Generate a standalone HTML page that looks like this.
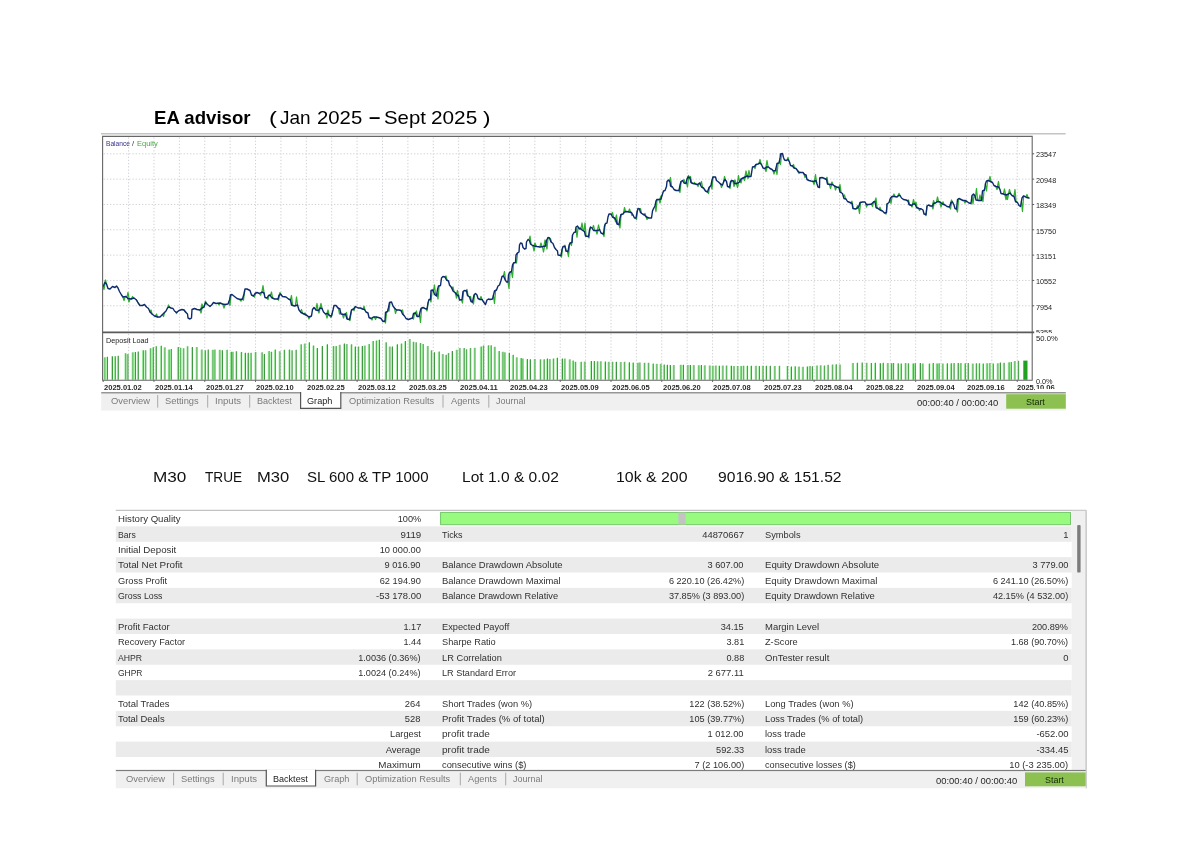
<!DOCTYPE html>
<html lang="en"><head><meta charset="utf-8"><title>EA advisor backtest</title>
<style>
html,body{margin:0;padding:0;background:#fff}
body{will-change:transform;width:1200px;height:848px;position:relative;overflow:hidden;font-family:"Liberation Sans",sans-serif}
.t{position:absolute;white-space:pre;display:block}
.r{position:absolute}
</style></head><body>
<span class="t" style="left:154.20px;transform-origin:0 50%;top:107.00px;font-size:18.4px;line-height:21px;color:#000;font-weight:bold;transform:scaleX(1.0121);">EA advisor</span>
<span class="t" style="left:269.10px;transform-origin:0 50%;top:107.00px;font-size:18.4px;line-height:21px;color:#000;transform:scaleX(1.2892);">(</span>
<span class="t" style="left:280.40px;transform-origin:0 50%;top:107.00px;font-size:18.4px;line-height:21px;color:#000;transform:scaleX(1.0314);">Jan</span>
<span class="t" style="left:317.10px;transform-origin:0 50%;top:107.00px;font-size:18.4px;line-height:21px;color:#000;transform:scaleX(1.1042);">2025</span>
<span class="t" style="left:368.70px;transform-origin:0 50%;top:106.00px;font-size:18.4px;line-height:21px;color:#000;font-weight:bold;transform:scaleX(1.1042);">–</span>
<span class="t" style="left:384.10px;transform-origin:0 50%;top:107.00px;font-size:18.4px;line-height:21px;color:#000;transform:scaleX(1.1069);">Sept</span>
<span class="t" style="left:431.10px;transform-origin:0 50%;top:107.00px;font-size:18.4px;line-height:21px;color:#000;transform:scaleX(1.1286);">2025</span>
<span class="t" style="left:482.80px;transform-origin:0 50%;top:107.00px;font-size:18.4px;line-height:21px;color:#000;transform:scaleX(1.2239);">)</span>
<svg class="r" style="left:0;top:0" width="1200" height="848" viewBox="0 0 1200 848"><line x1="101" y1="133.75" x2="1065.6" y2="133.75" stroke="#c4c4c4" stroke-width="1.4"/><path d="M128.59 137.4V331.4M128.59 333.9V379.8M153.98 137.4V331.4M153.98 333.9V379.8M179.37 137.4V331.4M179.37 333.9V379.8M204.76 137.4V331.4M204.76 333.9V379.8M230.15 137.4V331.4M230.15 333.9V379.8M255.54 137.4V331.4M255.54 333.9V379.8M280.93 137.4V331.4M280.93 333.9V379.8M306.32 137.4V331.4M306.32 333.9V379.8M331.71 137.4V331.4M331.71 333.9V379.8M357.10 137.4V331.4M357.10 333.9V379.8M382.49 137.4V331.4M382.49 333.9V379.8M407.88 137.4V331.4M407.88 333.9V379.8M433.27 137.4V331.4M433.27 333.9V379.8M458.66 137.4V331.4M458.66 333.9V379.8M484.05 137.4V331.4M484.05 333.9V379.8M509.44 137.4V331.4M509.44 333.9V379.8M534.83 137.4V331.4M534.83 333.9V379.8M560.22 137.4V331.4M560.22 333.9V379.8M585.61 137.4V331.4M585.61 333.9V379.8M611.00 137.4V331.4M611.00 333.9V379.8M636.39 137.4V331.4M636.39 333.9V379.8M661.78 137.4V331.4M661.78 333.9V379.8M687.17 137.4V331.4M687.17 333.9V379.8M712.56 137.4V331.4M712.56 333.9V379.8M737.95 137.4V331.4M737.95 333.9V379.8M763.34 137.4V331.4M763.34 333.9V379.8M788.73 137.4V331.4M788.73 333.9V379.8M814.12 137.4V331.4M814.12 333.9V379.8M839.51 137.4V331.4M839.51 333.9V379.8M864.90 137.4V331.4M864.90 333.9V379.8M890.29 137.4V331.4M890.29 333.9V379.8M915.68 137.4V331.4M915.68 333.9V379.8M941.07 137.4V331.4M941.07 333.9V379.8M966.46 137.4V331.4M966.46 333.9V379.8M991.85 137.4V331.4M991.85 333.9V379.8M1017.24 137.4V331.4M1017.24 333.9V379.8M103.6 153.80H1031.2M103.6 179.13H1031.2M103.6 204.46H1031.2M103.6 229.79H1031.2M103.6 255.12H1031.2M103.6 280.45H1031.2M103.6 305.78H1031.2" stroke="#d0d0d6" stroke-width="1" stroke-dasharray="1.3 1.9" fill="none"/><path d="M103.55 357.50h1.3V379.70h-1.3ZM106.05 357.00h1.3V379.70h-1.3ZM111.05 356.33h1.3V379.70h-1.3ZM113.88 356.33h1.3V379.70h-1.3ZM116.88 355.83h1.3V379.70h-1.3ZM124.38 353.33h1.3V379.70h-1.3ZM126.55 354.17h1.3V379.70h-1.3ZM131.55 352.50h1.3V379.70h-1.3ZM134.05 352.17h1.3V379.70h-1.3ZM136.88 351.67h1.3V379.70h-1.3ZM141.88 350.33h1.3V379.70h-1.3ZM144.38 350.33h1.3V379.70h-1.3ZM149.38 348.33h1.3V379.70h-1.3ZM151.88 347.50h1.3V379.70h-1.3ZM154.88 346.33h1.3V379.70h-1.3ZM159.88 345.83h1.3V379.70h-1.3ZM163.55 347.50h1.3V379.70h-1.3ZM167.72 349.67h1.3V379.70h-1.3ZM169.88 349.17h1.3V379.70h-1.3ZM176.88 347.17h1.3V379.70h-1.3ZM179.38 347.83h1.3V379.70h-1.3ZM182.38 348.33h1.3V379.70h-1.3ZM186.38 346.33h1.3V379.70h-1.3ZM191.05 347.17h1.3V379.70h-1.3ZM195.55 347.17h1.3V379.70h-1.3ZM200.55 349.67h1.3V379.70h-1.3ZM203.88 350.50h1.3V379.70h-1.3ZM206.88 349.67h1.3V379.70h-1.3ZM211.55 350.00h1.3V379.70h-1.3ZM213.55 349.67h1.3V379.70h-1.3ZM218.55 350.00h1.3V379.70h-1.3ZM221.05 350.33h1.3V379.70h-1.3ZM225.72 350.00h1.3V379.70h-1.3ZM229.88 352.00h1.3V379.70h-1.3ZM231.55 352.00h1.3V379.70h-1.3ZM235.22 351.33h1.3V379.70h-1.3ZM240.22 352.17h1.3V379.70h-1.3ZM244.05 353.00h1.3V379.70h-1.3ZM246.88 353.00h1.3V379.70h-1.3ZM249.72 353.00h1.3V379.70h-1.3ZM254.38 352.17h1.3V379.70h-1.3ZM260.72 352.50h1.3V379.70h-1.3ZM263.05 354.17h1.3V379.70h-1.3ZM267.72 351.17h1.3V379.70h-1.3ZM270.22 352.00h1.3V379.70h-1.3ZM273.88 349.67h1.3V379.70h-1.3ZM278.55 351.33h1.3V379.70h-1.3ZM283.22 350.00h1.3V379.70h-1.3ZM288.22 349.67h1.3V379.70h-1.3ZM290.72 350.50h1.3V379.70h-1.3ZM294.80 350.00h1.3V379.70h-1.3ZM299.80 344.50h1.3V379.70h-1.3ZM303.55 343.75h1.3V379.70h-1.3ZM308.05 342.50h1.3V379.70h-1.3ZM312.30 345.75h1.3V379.70h-1.3ZM316.05 348.25h1.3V379.70h-1.3ZM321.05 346.25h1.3V379.70h-1.3ZM326.05 344.50h1.3V379.70h-1.3ZM332.30 346.25h1.3V379.70h-1.3ZM334.80 346.25h1.3V379.70h-1.3ZM338.55 345.00h1.3V379.70h-1.3ZM343.05 343.75h1.3V379.70h-1.3ZM345.55 344.25h1.3V379.70h-1.3ZM350.30 344.50h1.3V379.70h-1.3ZM354.05 346.75h1.3V379.70h-1.3ZM357.30 346.75h1.3V379.70h-1.3ZM361.05 346.25h1.3V379.70h-1.3ZM363.55 345.75h1.3V379.70h-1.3ZM367.80 344.25h1.3V379.70h-1.3ZM371.80 341.25h1.3V379.70h-1.3ZM375.30 340.75h1.3V379.70h-1.3ZM378.05 340.00h1.3V379.70h-1.3ZM384.80 342.50h1.3V379.70h-1.3ZM388.55 346.75h1.3V379.70h-1.3ZM391.05 346.75h1.3V379.70h-1.3ZM396.05 344.50h1.3V379.70h-1.3ZM400.30 343.75h1.3V379.70h-1.3ZM404.05 341.25h1.3V379.70h-1.3ZM408.55 339.25h1.3V379.70h-1.3ZM412.30 342.00h1.3V379.70h-1.3ZM414.80 342.50h1.3V379.70h-1.3ZM419.30 343.25h1.3V379.70h-1.3ZM421.80 344.25h1.3V379.70h-1.3ZM426.55 346.25h1.3V379.70h-1.3ZM430.30 350.50h1.3V379.70h-1.3ZM433.05 352.50h1.3V379.70h-1.3ZM437.80 351.75h1.3V379.70h-1.3ZM441.55 354.25h1.3V379.70h-1.3ZM444.80 355.00h1.3V379.70h-1.3ZM447.30 353.25h1.3V379.70h-1.3ZM451.05 351.25h1.3V379.70h-1.3ZM455.55 350.00h1.3V379.70h-1.3ZM458.55 348.25h1.3V379.70h-1.3ZM462.80 348.25h1.3V379.70h-1.3ZM465.30 349.50h1.3V379.70h-1.3ZM469.30 348.25h1.3V379.70h-1.3ZM473.55 348.00h1.3V379.70h-1.3ZM479.80 346.75h1.3V379.70h-1.3ZM482.30 345.75h1.3V379.70h-1.3ZM487.30 345.50h1.3V379.70h-1.3ZM489.80 345.50h1.3V379.70h-1.3ZM493.55 347.00h1.3V379.70h-1.3ZM497.80 351.25h1.3V379.70h-1.3ZM501.55 352.00h1.3V379.70h-1.3ZM503.55 352.50h1.3V379.70h-1.3ZM508.05 353.00h1.3V379.70h-1.3ZM511.80 355.00h1.3V379.70h-1.3ZM515.55 357.50h1.3V379.70h-1.3ZM519.80 358.25h1.3V379.70h-1.3ZM521.55 358.75h1.3V379.70h-1.3ZM526.05 359.25h1.3V379.70h-1.3ZM529.05 359.50h1.3V379.70h-1.3ZM533.55 359.25h1.3V379.70h-1.3ZM539.30 359.50h1.3V379.70h-1.3ZM542.80 359.50h1.3V379.70h-1.3ZM546.05 358.75h1.3V379.70h-1.3ZM548.55 359.25h1.3V379.70h-1.3ZM552.30 358.75h1.3V379.70h-1.3ZM556.05 358.00h1.3V379.70h-1.3ZM561.05 358.75h1.3V379.70h-1.3ZM563.55 358.75h1.3V379.70h-1.3ZM568.55 359.50h1.3V379.70h-1.3ZM571.80 360.75h1.3V379.70h-1.3ZM574.30 362.00h1.3V379.70h-1.3ZM579.80 362.00h1.3V379.70h-1.3ZM583.55 361.75h1.3V379.70h-1.3ZM590.05 361.22h1.3V379.70h-1.3ZM593.15 361.32h1.3V379.70h-1.3ZM596.35 361.43h1.3V379.70h-1.3ZM599.55 361.50h1.3V379.70h-1.3ZM604.05 361.69h1.3V379.70h-1.3ZM607.55 362.01h1.3V379.70h-1.3ZM611.35 361.84h1.3V379.70h-1.3ZM615.05 361.97h1.3V379.70h-1.3ZM619.55 362.14h1.3V379.70h-1.3ZM623.35 362.01h1.3V379.70h-1.3ZM628.05 362.41h1.3V379.70h-1.3ZM631.85 362.64h1.3V379.70h-1.3ZM636.55 362.95h1.3V379.70h-1.3ZM638.55 362.62h1.3V379.70h-1.3ZM643.35 362.95h1.3V379.70h-1.3ZM647.35 363.00h1.3V379.70h-1.3ZM651.85 363.77h1.3V379.70h-1.3ZM655.55 364.01h1.3V379.70h-1.3ZM659.55 363.96h1.3V379.70h-1.3ZM662.85 364.80h1.3V379.70h-1.3ZM666.05 365.07h1.3V379.70h-1.3ZM669.05 365.10h1.3V379.70h-1.3ZM672.55 365.14h1.3V379.70h-1.3ZM679.55 364.98h1.3V379.70h-1.3ZM682.05 364.93h1.3V379.70h-1.3ZM686.55 365.32h1.3V379.70h-1.3ZM689.05 365.08h1.3V379.70h-1.3ZM692.55 365.21h1.3V379.70h-1.3ZM697.55 365.33h1.3V379.70h-1.3ZM700.05 365.24h1.3V379.70h-1.3ZM703.55 365.54h1.3V379.70h-1.3ZM708.55 365.59h1.3V379.70h-1.3ZM711.55 365.87h1.3V379.70h-1.3ZM714.55 365.71h1.3V379.70h-1.3ZM718.05 365.83h1.3V379.70h-1.3ZM721.55 365.79h1.3V379.70h-1.3ZM725.35 365.81h1.3V379.70h-1.3ZM730.05 365.84h1.3V379.70h-1.3ZM732.65 366.22h1.3V379.70h-1.3ZM736.45 366.10h1.3V379.70h-1.3ZM739.75 366.15h1.3V379.70h-1.3ZM742.35 365.87h1.3V379.70h-1.3ZM746.15 366.04h1.3V379.70h-1.3ZM749.95 365.94h1.3V379.70h-1.3ZM754.65 365.93h1.3V379.70h-1.3ZM758.15 366.21h1.3V379.70h-1.3ZM761.65 365.83h1.3V379.70h-1.3ZM765.15 365.98h1.3V379.70h-1.3ZM768.95 365.95h1.3V379.70h-1.3ZM773.55 366.08h1.3V379.70h-1.3ZM778.25 365.90h1.3V379.70h-1.3ZM786.25 366.09h1.3V379.70h-1.3ZM790.05 366.73h1.3V379.70h-1.3ZM793.85 366.55h1.3V379.70h-1.3ZM797.65 366.66h1.3V379.70h-1.3ZM801.65 366.97h1.3V379.70h-1.3ZM806.15 366.60h1.3V379.70h-1.3ZM808.65 366.30h1.3V379.70h-1.3ZM811.15 366.45h1.3V379.70h-1.3ZM815.65 365.81h1.3V379.70h-1.3ZM819.45 365.38h1.3V379.70h-1.3ZM823.25 365.65h1.3V379.70h-1.3ZM826.75 364.98h1.3V379.70h-1.3ZM831.35 364.70h1.3V379.70h-1.3ZM834.85 364.41h1.3V379.70h-1.3ZM838.65 364.62h1.3V379.70h-1.3ZM851.65 363.19h1.3V379.70h-1.3ZM856.15 362.99h1.3V379.70h-1.3ZM860.85 362.73h1.3V379.70h-1.3ZM865.45 362.98h1.3V379.70h-1.3ZM870.15 363.08h1.3V379.70h-1.3ZM873.95 362.95h1.3V379.70h-1.3ZM879.05 363.37h1.3V379.70h-1.3ZM881.88 362.90h1.3V379.70h-1.3ZM886.55 363.24h1.3V379.70h-1.3ZM890.22 363.49h1.3V379.70h-1.3ZM892.22 363.12h1.3V379.70h-1.3ZM896.88 363.55h1.3V379.70h-1.3ZM899.88 363.77h1.3V379.70h-1.3ZM904.38 363.21h1.3V379.70h-1.3ZM907.22 363.41h1.3V379.70h-1.3ZM911.88 363.60h1.3V379.70h-1.3ZM913.88 363.35h1.3V379.70h-1.3ZM919.05 363.28h1.3V379.70h-1.3ZM921.55 363.59h1.3V379.70h-1.3ZM928.22 363.68h1.3V379.70h-1.3ZM931.88 363.23h1.3V379.70h-1.3ZM935.72 363.60h1.3V379.70h-1.3ZM937.72 363.54h1.3V379.70h-1.3ZM941.55 363.65h1.3V379.70h-1.3ZM946.05 363.41h1.3V379.70h-1.3ZM949.88 363.49h1.3V379.70h-1.3ZM952.72 363.16h1.3V379.70h-1.3ZM956.88 363.14h1.3V379.70h-1.3ZM959.55 363.19h1.3V379.70h-1.3ZM963.88 363.51h1.3V379.70h-1.3ZM966.88 363.30h1.3V379.70h-1.3ZM971.55 363.69h1.3V379.70h-1.3ZM975.22 363.41h1.3V379.70h-1.3ZM978.22 363.44h1.3V379.70h-1.3ZM981.88 363.76h1.3V379.70h-1.3ZM985.72 363.35h1.3V379.70h-1.3ZM988.55 363.32h1.3V379.70h-1.3ZM991.88 363.58h1.3V379.70h-1.3ZM996.55 363.52h1.3V379.70h-1.3ZM999.05 362.79h1.3V379.70h-1.3ZM1002.72 363.00h1.3V379.70h-1.3ZM1007.72 362.50h1.3V379.70h-1.3ZM1009.88 362.14h1.3V379.70h-1.3ZM1013.55 361.16h1.3V379.70h-1.3ZM1017.22 360.99h1.3V379.70h-1.3Z" fill="#a6f3a6"/><path d="M104.55 357.30h0.9V379.70h-0.9ZM107.05 356.80h0.9V379.70h-0.9ZM112.05 356.13h0.9V379.70h-0.9ZM114.88 356.13h0.9V379.70h-0.9ZM117.88 355.63h0.9V379.70h-0.9ZM125.38 353.13h0.9V379.70h-0.9ZM127.55 353.97h0.9V379.70h-0.9ZM132.55 352.30h0.9V379.70h-0.9ZM135.05 351.97h0.9V379.70h-0.9ZM137.88 351.47h0.9V379.70h-0.9ZM142.88 350.13h0.9V379.70h-0.9ZM145.38 350.13h0.9V379.70h-0.9ZM150.38 348.13h0.9V379.70h-0.9ZM152.88 347.30h0.9V379.70h-0.9ZM155.88 346.13h0.9V379.70h-0.9ZM160.88 345.63h0.9V379.70h-0.9ZM164.55 347.30h0.9V379.70h-0.9ZM168.72 349.47h0.9V379.70h-0.9ZM170.88 348.97h0.9V379.70h-0.9ZM177.88 346.97h0.9V379.70h-0.9ZM180.38 347.63h0.9V379.70h-0.9ZM183.38 348.13h0.9V379.70h-0.9ZM187.38 346.13h0.9V379.70h-0.9ZM192.05 346.97h0.9V379.70h-0.9ZM196.55 346.97h0.9V379.70h-0.9ZM201.55 349.47h0.9V379.70h-0.9ZM204.88 350.30h0.9V379.70h-0.9ZM207.88 349.47h0.9V379.70h-0.9ZM212.55 349.80h0.9V379.70h-0.9ZM214.55 349.47h0.9V379.70h-0.9ZM219.55 349.80h0.9V379.70h-0.9ZM222.05 350.13h0.9V379.70h-0.9ZM226.72 349.80h0.9V379.70h-0.9ZM230.88 351.80h0.9V379.70h-0.9ZM232.55 351.80h0.9V379.70h-0.9ZM236.22 351.13h0.9V379.70h-0.9ZM241.22 351.97h0.9V379.70h-0.9ZM245.05 352.80h0.9V379.70h-0.9ZM247.88 352.80h0.9V379.70h-0.9ZM250.72 352.80h0.9V379.70h-0.9ZM255.38 351.97h0.9V379.70h-0.9ZM261.72 352.30h0.9V379.70h-0.9ZM264.05 353.97h0.9V379.70h-0.9ZM268.72 350.97h0.9V379.70h-0.9ZM271.22 351.80h0.9V379.70h-0.9ZM274.88 349.47h0.9V379.70h-0.9ZM279.55 351.13h0.9V379.70h-0.9ZM284.22 349.80h0.9V379.70h-0.9ZM289.22 349.47h0.9V379.70h-0.9ZM291.72 350.30h0.9V379.70h-0.9ZM295.80 349.80h0.9V379.70h-0.9ZM300.80 344.30h0.9V379.70h-0.9ZM304.55 343.55h0.9V379.70h-0.9ZM309.05 342.30h0.9V379.70h-0.9ZM313.30 345.55h0.9V379.70h-0.9ZM317.05 348.05h0.9V379.70h-0.9ZM322.05 346.05h0.9V379.70h-0.9ZM327.05 344.30h0.9V379.70h-0.9ZM333.30 346.05h0.9V379.70h-0.9ZM335.80 346.05h0.9V379.70h-0.9ZM339.55 344.80h0.9V379.70h-0.9ZM344.05 343.55h0.9V379.70h-0.9ZM346.55 344.05h0.9V379.70h-0.9ZM351.30 344.30h0.9V379.70h-0.9ZM355.05 346.55h0.9V379.70h-0.9ZM358.30 346.55h0.9V379.70h-0.9ZM362.05 346.05h0.9V379.70h-0.9ZM364.55 345.55h0.9V379.70h-0.9ZM368.80 344.05h0.9V379.70h-0.9ZM372.80 341.05h0.9V379.70h-0.9ZM376.30 340.55h0.9V379.70h-0.9ZM379.05 339.80h0.9V379.70h-0.9ZM385.80 342.30h0.9V379.70h-0.9ZM389.55 346.55h0.9V379.70h-0.9ZM392.05 346.55h0.9V379.70h-0.9ZM397.05 344.30h0.9V379.70h-0.9ZM401.30 343.55h0.9V379.70h-0.9ZM405.05 341.05h0.9V379.70h-0.9ZM409.55 339.05h0.9V379.70h-0.9ZM413.30 341.80h0.9V379.70h-0.9ZM415.80 342.30h0.9V379.70h-0.9ZM420.30 343.05h0.9V379.70h-0.9ZM422.80 344.05h0.9V379.70h-0.9ZM427.55 346.05h0.9V379.70h-0.9ZM431.30 350.30h0.9V379.70h-0.9ZM434.05 352.30h0.9V379.70h-0.9ZM438.80 351.55h0.9V379.70h-0.9ZM442.55 354.05h0.9V379.70h-0.9ZM445.80 354.80h0.9V379.70h-0.9ZM448.30 353.05h0.9V379.70h-0.9ZM452.05 351.05h0.9V379.70h-0.9ZM456.55 349.80h0.9V379.70h-0.9ZM459.55 348.05h0.9V379.70h-0.9ZM463.80 348.05h0.9V379.70h-0.9ZM466.30 349.30h0.9V379.70h-0.9ZM470.30 348.05h0.9V379.70h-0.9ZM474.55 347.80h0.9V379.70h-0.9ZM480.80 346.55h0.9V379.70h-0.9ZM483.30 345.55h0.9V379.70h-0.9ZM488.30 345.30h0.9V379.70h-0.9ZM490.80 345.30h0.9V379.70h-0.9ZM494.55 346.80h0.9V379.70h-0.9ZM498.80 351.05h0.9V379.70h-0.9ZM502.55 351.80h0.9V379.70h-0.9ZM504.55 352.30h0.9V379.70h-0.9ZM509.05 352.80h0.9V379.70h-0.9ZM512.80 354.80h0.9V379.70h-0.9ZM516.55 357.30h0.9V379.70h-0.9ZM520.80 358.05h0.9V379.70h-0.9ZM522.55 358.55h0.9V379.70h-0.9ZM527.05 359.05h0.9V379.70h-0.9ZM530.05 359.30h0.9V379.70h-0.9ZM534.55 359.05h0.9V379.70h-0.9ZM540.30 359.30h0.9V379.70h-0.9ZM543.80 359.30h0.9V379.70h-0.9ZM547.05 358.55h0.9V379.70h-0.9ZM549.55 359.05h0.9V379.70h-0.9ZM553.30 358.55h0.9V379.70h-0.9ZM557.05 357.80h0.9V379.70h-0.9ZM562.05 358.55h0.9V379.70h-0.9ZM564.55 358.55h0.9V379.70h-0.9ZM569.55 359.30h0.9V379.70h-0.9ZM572.80 360.55h0.9V379.70h-0.9ZM575.30 361.80h0.9V379.70h-0.9ZM580.80 361.80h0.9V379.70h-0.9ZM584.55 361.55h0.9V379.70h-0.9ZM591.05 361.02h0.9V379.70h-0.9ZM594.15 361.12h0.9V379.70h-0.9ZM597.35 361.23h0.9V379.70h-0.9ZM600.55 361.30h0.9V379.70h-0.9ZM605.05 361.49h0.9V379.70h-0.9ZM608.55 361.81h0.9V379.70h-0.9ZM612.35 361.64h0.9V379.70h-0.9ZM616.05 361.77h0.9V379.70h-0.9ZM620.55 361.94h0.9V379.70h-0.9ZM624.35 361.81h0.9V379.70h-0.9ZM629.05 362.21h0.9V379.70h-0.9ZM632.85 362.44h0.9V379.70h-0.9ZM637.55 362.75h0.9V379.70h-0.9ZM639.55 362.42h0.9V379.70h-0.9ZM644.35 362.75h0.9V379.70h-0.9ZM648.35 362.80h0.9V379.70h-0.9ZM652.85 363.57h0.9V379.70h-0.9ZM656.55 363.81h0.9V379.70h-0.9ZM660.55 363.76h0.9V379.70h-0.9ZM663.85 364.60h0.9V379.70h-0.9ZM667.05 364.87h0.9V379.70h-0.9ZM670.05 364.90h0.9V379.70h-0.9ZM673.55 364.94h0.9V379.70h-0.9ZM680.55 364.78h0.9V379.70h-0.9ZM683.05 364.73h0.9V379.70h-0.9ZM687.55 365.12h0.9V379.70h-0.9ZM690.05 364.88h0.9V379.70h-0.9ZM693.55 365.01h0.9V379.70h-0.9ZM698.55 365.13h0.9V379.70h-0.9ZM701.05 365.04h0.9V379.70h-0.9ZM704.55 365.34h0.9V379.70h-0.9ZM709.55 365.39h0.9V379.70h-0.9ZM712.55 365.67h0.9V379.70h-0.9ZM715.55 365.51h0.9V379.70h-0.9ZM719.05 365.63h0.9V379.70h-0.9ZM722.55 365.59h0.9V379.70h-0.9ZM726.35 365.61h0.9V379.70h-0.9ZM731.05 365.64h0.9V379.70h-0.9ZM733.65 366.02h0.9V379.70h-0.9ZM737.45 365.90h0.9V379.70h-0.9ZM740.75 365.95h0.9V379.70h-0.9ZM743.35 365.67h0.9V379.70h-0.9ZM747.15 365.84h0.9V379.70h-0.9ZM750.95 365.74h0.9V379.70h-0.9ZM755.65 365.73h0.9V379.70h-0.9ZM759.15 366.01h0.9V379.70h-0.9ZM762.65 365.63h0.9V379.70h-0.9ZM766.15 365.78h0.9V379.70h-0.9ZM769.95 365.75h0.9V379.70h-0.9ZM774.55 365.88h0.9V379.70h-0.9ZM779.25 365.70h0.9V379.70h-0.9ZM787.25 365.89h0.9V379.70h-0.9ZM791.05 366.53h0.9V379.70h-0.9ZM794.85 366.35h0.9V379.70h-0.9ZM798.65 366.46h0.9V379.70h-0.9ZM802.65 366.77h0.9V379.70h-0.9ZM807.15 366.40h0.9V379.70h-0.9ZM809.65 366.10h0.9V379.70h-0.9ZM812.15 366.25h0.9V379.70h-0.9ZM816.65 365.61h0.9V379.70h-0.9ZM820.45 365.18h0.9V379.70h-0.9ZM824.25 365.45h0.9V379.70h-0.9ZM827.75 364.78h0.9V379.70h-0.9ZM832.35 364.50h0.9V379.70h-0.9ZM835.85 364.21h0.9V379.70h-0.9ZM839.65 364.42h0.9V379.70h-0.9ZM852.65 362.99h0.9V379.70h-0.9ZM857.15 362.79h0.9V379.70h-0.9ZM861.85 362.53h0.9V379.70h-0.9ZM866.45 362.78h0.9V379.70h-0.9ZM871.15 362.88h0.9V379.70h-0.9ZM874.95 362.75h0.9V379.70h-0.9ZM880.05 363.17h0.9V379.70h-0.9ZM882.88 362.70h0.9V379.70h-0.9ZM887.55 363.04h0.9V379.70h-0.9ZM891.22 363.29h0.9V379.70h-0.9ZM893.22 362.92h0.9V379.70h-0.9ZM897.88 363.35h0.9V379.70h-0.9ZM900.88 363.57h0.9V379.70h-0.9ZM905.38 363.01h0.9V379.70h-0.9ZM908.22 363.21h0.9V379.70h-0.9ZM912.88 363.40h0.9V379.70h-0.9ZM914.88 363.15h0.9V379.70h-0.9ZM920.05 363.08h0.9V379.70h-0.9ZM922.55 363.39h0.9V379.70h-0.9ZM929.22 363.48h0.9V379.70h-0.9ZM932.88 363.03h0.9V379.70h-0.9ZM936.72 363.40h0.9V379.70h-0.9ZM938.72 363.34h0.9V379.70h-0.9ZM942.55 363.45h0.9V379.70h-0.9ZM947.05 363.21h0.9V379.70h-0.9ZM950.88 363.29h0.9V379.70h-0.9ZM953.72 362.96h0.9V379.70h-0.9ZM957.88 362.94h0.9V379.70h-0.9ZM960.55 362.99h0.9V379.70h-0.9ZM964.88 363.31h0.9V379.70h-0.9ZM967.88 363.10h0.9V379.70h-0.9ZM972.55 363.49h0.9V379.70h-0.9ZM976.22 363.21h0.9V379.70h-0.9ZM979.22 363.24h0.9V379.70h-0.9ZM982.88 363.56h0.9V379.70h-0.9ZM986.72 363.15h0.9V379.70h-0.9ZM989.55 363.12h0.9V379.70h-0.9ZM992.88 363.38h0.9V379.70h-0.9ZM997.55 363.32h0.9V379.70h-0.9ZM1000.05 362.59h0.9V379.70h-0.9ZM1003.72 362.80h0.9V379.70h-0.9ZM1008.72 362.30h0.9V379.70h-0.9ZM1010.88 361.94h0.9V379.70h-0.9ZM1014.55 360.96h0.9V379.70h-0.9ZM1018.22 360.79h0.9V379.70h-0.9Z" fill="#2d8f2d"/><rect x="1023.3" y="360.6" width="4.2" height="19.2" fill="#22a022"/><path d="M102.90 286.50L104.00 289.50L105.10 282.60M104.40 283.70L105.50 280.00L106.60 284.30M122.90 296.87L124.00 300.50L125.10 296.65M126.90 297.40L128.00 292.50L129.10 298.68M127.90 298.40L129.00 302.00L130.10 298.85M131.40 298.87L132.50 296.50L133.60 298.13M136.40 299.92L137.50 302.00L138.60 303.63M149.90 311.77L151.00 310.00L152.10 314.08M155.40 316.30L156.50 314.00L157.60 317.00M162.40 314.60L163.50 316.50L164.60 312.40M167.40 308.20L168.50 305.00L169.60 307.30M175.40 311.68L176.50 313.50L177.60 311.62M183.90 309.98L185.00 311.50L186.10 312.60M199.90 309.98L201.00 313.00L202.10 307.95M200.90 309.10L202.00 304.00L203.10 307.45M204.40 305.80L205.50 301.20L206.60 303.60M217.90 303.26L219.00 305.00L220.10 303.04M222.90 304.08L224.00 308.00L225.10 304.48M228.90 301.60L230.00 305.50L231.10 294.80M239.90 299.47L241.00 301.20L242.10 299.08M242.40 299.02L243.50 300.20L244.60 291.00M253.40 295.95L254.50 297.20L255.60 293.20M259.40 293.46L260.50 295.20L261.60 292.24M261.90 292.06L263.00 285.70L264.10 293.45M266.90 297.98L268.00 299.70L269.10 295.30M270.40 295.67L271.50 292.00L272.60 298.05M277.40 299.00L278.50 300.20L279.60 294.90M278.90 295.85L280.00 292.50L281.10 294.75M290.40 299.95L291.50 295.50L292.60 305.37M295.40 305.70L296.50 297.00L297.60 305.33M300.40 311.75L301.50 309.50L302.60 313.30M303.90 313.95L305.00 313.00L306.10 315.05M307.90 316.17L309.00 319.00L310.10 316.56M315.90 309.88L317.00 303.50L318.10 310.42M317.90 310.38L319.00 313.00L320.10 308.02M319.90 308.17L321.00 303.50L322.10 308.73M325.90 313.90L327.00 318.00L328.10 314.10M326.90 313.65L328.00 310.00L329.10 315.10M329.90 315.60L331.00 317.70L332.10 313.60M338.40 308.20L339.50 314.00L340.60 312.40M342.40 314.23L343.50 318.00L344.60 314.30M345.40 314.03L346.50 312.50L347.60 319.12M348.90 319.38L350.00 320.50L351.10 312.00M352.90 309.30L354.00 310.70L355.10 307.00M362.90 309.10L364.00 306.20L365.10 310.50M370.90 318.45L372.00 320.00L373.10 317.24M374.40 317.00L375.50 319.50L376.60 317.12M384.40 321.15L385.50 323.00L386.60 311.95M387.90 309.90L389.00 311.00L390.10 302.35M394.40 307.87L395.50 313.50L396.60 310.00M401.40 311.43L402.50 310.00L403.60 315.10M412.40 318.03L413.50 319.00L414.60 313.23M415.40 313.02L416.50 311.00L417.60 316.50M419.40 314.70L420.50 322.50L421.60 308.20M425.90 308.73L427.00 311.00L428.10 302.65M429.90 299.50L431.00 302.00L432.10 290.23M433.40 291.20L434.50 285.00L435.60 295.33M436.90 293.40L438.00 299.00L439.10 285.85M444.90 276.98L446.00 276.00L447.10 280.30M451.90 288.43L453.00 287.00L454.10 291.83M455.40 293.00L456.50 298.00L457.60 295.20M456.40 294.25L457.50 290.50L458.60 295.95M461.40 299.65L462.50 303.00L463.60 291.10M465.90 290.85L467.00 289.50L468.10 295.95M469.40 296.92L470.50 296.50L471.60 301.70M472.40 301.97L473.50 304.00L474.60 294.40M479.90 299.45L481.00 296.50L482.10 299.65M493.40 295.40L494.50 303.50L495.60 290.45M503.40 276.03L504.50 271.50L505.60 280.50M507.90 282.00L509.00 288.50L510.10 272.20M511.40 271.55L512.50 277.50L513.60 262.98M515.40 262.52L516.50 263.00L517.60 252.93M528.90 240.10L530.00 236.20L531.10 244.45M532.90 245.60L534.00 251.00L535.10 246.12M533.90 245.85L535.00 243.00L536.10 246.32M539.90 246.98L541.00 243.00L542.10 246.65M542.40 246.60L543.50 252.00L544.60 246.18M543.90 246.32L545.00 240.00L546.10 242.70M545.90 243.80L547.00 249.00L548.10 237.53M549.40 237.97L550.50 238.70L551.60 242.45M560.40 255.40L561.50 257.20L562.60 247.70M563.90 246.50L565.00 245.20L566.10 251.03M567.40 251.35L568.50 256.50L569.60 244.00M570.40 242.90L571.50 245.50L572.60 234.83M575.90 228.00L577.00 237.20L578.10 227.00M580.90 228.90L582.00 223.00L583.10 230.66M583.90 231.14L585.00 223.00L586.10 236.10M587.90 236.40L589.00 238.00L590.10 228.20M592.40 228.67L593.50 225.50L594.60 230.50M595.90 230.50L597.00 234.00L598.10 230.43M597.40 230.50L598.50 225.00L599.60 229.73M602.90 233.76L604.00 236.50L605.10 224.50M611.40 214.80L612.50 212.50L613.60 217.55M614.40 217.95L615.50 221.50L616.60 222.40M615.40 219.20L616.50 215.00L617.60 224.15M618.90 224.47L620.00 228.00L621.10 214.47M623.40 213.47L624.50 207.50L625.60 211.72M628.40 211.88L629.50 209.00L630.60 212.32M630.90 212.38L632.00 215.50L633.10 215.20M635.40 218.00L636.50 219.50L637.60 209.90M639.40 208.97L640.50 208.70L641.60 213.33M643.90 214.70L645.00 213.50L646.10 216.60M645.90 216.40L647.00 219.50L648.10 217.64M654.90 206.17L656.00 211.50L657.10 199.50M658.90 199.50L660.00 203.00L661.10 198.67M659.90 199.28L661.00 196.00L662.10 195.33M669.40 181.20L670.50 177.50L671.60 186.55M678.90 190.50L680.00 192.50L681.10 181.43M682.90 181.17L684.00 179.50L685.10 183.28M686.40 181.70L687.50 187.00L688.60 177.30M687.40 178.20L688.50 175.50L689.60 177.80M689.40 177.70L690.50 176.50L691.60 182.80M693.40 183.58L694.50 182.50L695.60 184.03M696.90 184.35L698.00 186.50L699.10 183.45M700.40 184.80L701.50 181.50L702.60 187.55M707.40 191.95L708.50 193.50L709.60 186.90M710.90 185.60L712.00 189.00L713.10 177.00M720.40 183.90L721.50 187.50L722.60 184.73M723.40 182.60L724.50 176.50L725.60 180.30M728.90 186.85L730.00 188.50L731.10 181.10M732.90 180.85L734.00 186.50L735.10 183.50M733.90 182.00L735.00 180.00L736.10 183.50M736.40 183.50L737.50 187.50L738.60 182.54M737.40 183.26L738.50 175.50L739.60 181.80M739.90 181.20L741.00 183.00L742.10 178.45M743.40 177.80L744.50 180.50L745.60 176.70M744.90 177.05L746.00 171.00L747.10 176.03M746.90 176.05L748.00 178.50L749.10 176.50M747.90 176.22L749.00 170.50L750.10 176.50M753.90 166.65L755.00 168.50L756.10 164.47M758.90 163.55L760.00 159.50L761.10 164.10M764.90 168.47L766.00 171.50L767.10 167.00M765.90 167.60L767.00 160.50L768.10 167.00M772.90 170.40L774.00 174.00L775.10 170.60M775.90 168.70L777.00 174.50L778.10 163.22M779.40 161.20L780.50 164.50L781.60 153.72M786.90 160.23L788.00 157.50L789.10 161.33M792.40 165.97L793.50 164.50L794.60 168.15M797.90 171.10L799.00 173.50L800.10 172.40M803.90 173.70L805.00 177.50L806.10 175.45M812.90 181.38L814.00 184.50L815.10 180.86M814.40 181.14L815.50 174.50L816.60 182.60M825.90 179.20L827.00 177.20L828.10 184.12M829.40 184.38L830.50 188.50L831.60 184.50M830.90 184.50L832.00 182.00L833.10 184.95M834.40 185.92L835.50 190.00L836.60 187.02M838.90 187.48L840.00 184.50L841.10 192.66M843.40 196.50L844.50 195.00L845.60 198.90M850.90 202.95L852.00 201.20L853.10 208.52M856.40 208.55L857.50 205.70L858.60 206.53M858.40 206.80L859.50 213.50L860.60 202.38M865.40 202.67L866.50 207.00L867.60 204.50M871.40 204.02L872.50 206.50L873.60 201.97M874.90 201.53L876.00 198.00L877.10 208.05M878.90 209.17L880.00 207.20L881.10 210.44M884.90 212.90L886.00 214.20L887.10 203.92M889.90 199.80L891.00 203.50L892.10 196.50M892.90 196.50L894.00 194.00L895.10 196.62M897.90 196.10L899.00 193.30L900.10 195.67M907.40 200.70L908.50 200.00L909.60 204.74M910.90 205.26L912.00 207.00L913.10 204.00M912.40 204.60L913.50 199.50L914.60 204.00M914.90 204.00L916.00 202.20L917.10 207.74M918.40 208.26L919.50 210.50L920.60 208.82M924.90 214.22L926.00 215.70L927.10 205.93M931.90 206.00L933.00 209.00L934.10 203.35M932.40 206.00L933.50 200.50L934.60 203.22M936.40 202.33L937.50 197.00L938.60 201.72M939.90 201.98L941.00 207.00L942.10 203.68M941.90 203.52L943.00 201.80L944.10 204.64M949.40 206.98L950.50 209.00L951.60 202.30M950.40 204.30L951.50 200.00L952.60 202.20M956.40 208.97L957.50 212.00L958.60 198.77M963.90 200.50L965.00 203.00L966.10 201.05M971.90 196.30L973.00 204.00L974.10 194.80M975.40 197.60L976.50 188.50L977.60 200.32M978.90 200.50L980.00 195.00L981.10 200.50M981.90 196.70L983.00 201.50L984.10 190.20M985.40 184.15L986.50 191.00L987.60 180.72M988.90 180.70L990.00 176.50L991.10 181.80M995.90 186.45L997.00 189.50L998.10 186.92M997.40 186.78L998.50 181.50L999.60 188.83M1003.40 193.98L1004.50 189.00L1005.60 194.84M1004.90 194.56L1006.00 199.50L1007.10 194.56M1006.40 194.84L1007.50 199.50L1008.60 193.93M1008.40 194.04L1009.50 189.50L1010.60 193.75M1013.90 196.45L1015.00 189.50L1016.10 201.80M1021.40 201.40L1022.50 211.50L1023.60 196.03M1025.90 197.10L1027.00 194.50L1028.10 197.82" stroke="#2fae2f" stroke-width="1.25" fill="none" stroke-linejoin="round" stroke-linecap="round"/><path d="M103.00 286.50L105.00 282.50L106.50 284.00L108.00 288.50L110.00 289.00L112.50 286.50L115.00 287.50L116.50 286.00L118.00 288.00L119.50 291.50L121.50 295.00L123.00 297.00L126.00 296.50L128.00 298.50L131.00 299.00L134.00 298.00L136.50 300.00L138.50 303.50L140.00 305.50L142.50 305.50L144.50 304.50L146.50 307.00L148.50 308.50L150.00 312.00L152.00 314.00L154.50 316.00L157.50 317.00L160.00 317.00L162.00 315.00L164.00 313.00L166.00 311.00L167.50 308.00L169.00 307.00L171.00 308.00L173.00 308.50L174.50 311.00L176.50 312.50L179.00 310.50L182.00 309.50L184.00 310.00L186.00 312.50L187.50 314.00L188.00 318.00L190.00 319.00L191.50 318.00L192.00 309.50L194.50 308.50L197.00 309.50L200.00 310.00L202.00 308.00L204.00 307.00L205.50 302.50L207.50 304.50L210.00 306.50L212.00 304.50L213.50 302.50L216.00 303.50L220.00 303.00L220.00 303.00L222.50 304.00L225.00 304.50L228.00 304.00L229.50 300.00L230.50 295.00L232.00 294.50L234.50 296.50L237.00 298.50L240.00 299.50L242.50 299.00L244.00 294.00L245.00 289.00L247.00 289.00L250.00 290.50L251.50 295.00L253.50 296.00L255.00 293.50L257.00 292.50L259.50 293.50L262.00 292.00L264.00 293.00L265.00 297.50L267.00 298.00L268.50 295.50L270.00 295.00L271.50 297.50L274.50 299.00L278.00 299.00L279.00 295.50L280.50 294.00L282.50 296.50L286.00 297.00L288.50 299.00L290.50 300.00L291.50 305.00L294.50 306.00L297.50 305.00L299.00 310.00L301.00 312.50L304.00 314.00L307.00 315.50L309.00 317.00L311.50 316.00L312.50 309.50L314.00 307.50L316.00 310.00L318.50 310.50L320.00 308.00L322.00 308.50L323.50 312.00L325.50 314.00L327.50 313.50L329.50 315.50L331.50 316.00L333.00 310.00L334.00 305.50L336.00 305.50L338.00 308.00L340.00 309.00L340.00 310.00L341.00 314.00L344.00 314.50L345.50 314.00L347.00 319.00L349.50 319.50L350.50 315.00L351.50 310.00L353.50 309.00L355.50 306.50L358.00 308.00L360.50 308.00L362.50 309.00L364.50 309.50L366.00 312.00L368.00 313.00L369.00 317.50L371.00 318.50L373.50 317.00L376.00 317.00L378.50 317.50L381.00 318.50L383.00 321.50L385.00 321.00L385.50 312.50L387.50 311.50L388.50 307.50L389.50 302.50L391.50 302.00L393.00 306.00L394.50 308.00L396.50 310.00L399.00 310.00L401.00 310.50L402.50 314.00L404.50 316.00L406.00 318.50L408.50 319.50L411.00 318.50L412.50 318.00L413.50 313.50L415.50 313.00L417.00 316.50L419.00 316.50L420.00 312.00L421.00 308.50L423.00 307.50L425.00 308.50L427.00 309.00L428.00 303.00L429.00 299.50L430.50 299.50L431.00 290.50L433.00 290.00L434.50 294.50L436.50 296.00L437.50 289.50L438.50 286.00L440.50 285.50L441.50 278.00L443.00 276.50L445.00 277.00L446.50 280.00L448.50 281.00L449.50 285.00L451.50 287.50L453.00 291.00L455.00 292.50L457.00 295.00L458.50 295.50L459.50 300.00L460.00 300.00L462.00 299.50L463.00 291.50L464.50 290.50L466.50 291.00L467.50 295.50L469.50 297.00L471.00 301.50L472.50 302.00L474.00 295.00L475.50 293.50L477.00 295.00L478.00 298.50L480.00 299.50L482.00 299.50L484.00 302.50L485.50 304.50L487.00 300.00L488.50 299.00L490.00 299.50L492.50 299.00L493.50 295.00L494.50 291.00L496.50 290.00L498.00 286.00L499.50 285.00L501.00 280.50L502.00 276.50L503.50 276.00L505.00 279.50L506.50 282.00L508.00 282.00L508.50 275.00L509.50 272.50L511.50 271.50L512.50 265.00L513.50 263.00L515.50 262.50L516.00 255.00L517.50 253.00L519.00 252.00L519.50 245.00L520.50 243.00L522.00 243.50L523.00 247.50L524.50 249.00L526.00 248.50L526.50 242.00L528.00 239.50L529.50 240.50L530.50 244.00L532.50 245.50L534.50 246.00L537.00 246.50L540.00 247.00L543.00 246.50L545.50 246.00L546.50 240.50L548.00 237.50L549.50 238.00L551.00 242.00L553.00 243.50L554.50 247.50L556.00 249.50L557.50 251.00L558.00 255.00L561.00 255.50L562.00 249.50L563.00 246.50L565.00 246.50L566.00 251.00L568.00 251.50L569.00 245.50L570.00 243.00L572.00 242.50L572.50 235.00L574.00 232.50L575.50 232.00L576.00 227.00L577.50 226.00L579.00 228.50L580.00 229.00L580.00 228.00L582.00 230.00L584.50 231.50L585.50 236.00L588.50 236.50L589.50 230.00L590.50 227.00L592.00 228.00L593.50 230.50L596.00 230.50L598.00 230.50L599.50 229.50L601.00 233.00L603.50 234.00L604.50 226.00L605.50 223.50L607.00 223.00L608.00 217.00L609.00 214.00L611.00 214.00L612.50 217.00L614.50 218.00L616.00 220.00L617.00 224.00L619.00 224.50L620.00 218.00L621.00 214.50L623.00 214.00L624.50 212.00L626.50 211.50L629.00 212.00L631.50 212.50L633.00 215.00L634.50 218.00L636.00 218.00L637.00 212.00L638.00 208.50L639.50 209.00L640.50 212.50L642.50 214.00L644.50 215.00L646.50 217.00L649.00 218.00L651.50 218.00L652.50 211.00L653.50 208.50L655.00 206.00L656.00 201.00L657.00 199.50L659.00 199.50L661.00 199.00L662.50 194.00L663.50 191.00L665.00 190.50L666.50 186.50L667.00 181.50L668.50 180.00L670.00 182.00L670.50 186.00L672.50 187.00L674.00 189.50L676.00 190.50L679.00 190.50L680.00 185.00L681.00 181.50L682.50 180.50L684.00 183.00L686.00 183.50L687.00 179.00L688.00 177.00L690.00 178.00L691.00 182.50L693.00 183.50L695.50 184.00L697.50 184.50L699.00 183.50L700.00 183.00L700.00 184.00L701.50 187.00L703.50 188.00L705.50 191.00L707.50 192.00L709.00 187.50L711.00 185.50L712.00 180.00L713.00 177.00L715.50 177.00L716.50 180.50L718.50 182.00L720.50 184.00L722.50 185.00L724.00 181.00L725.00 179.50L726.50 181.50L727.50 186.50L729.50 187.00L730.50 182.00L731.50 180.50L733.50 181.00L734.50 183.50L737.00 183.50L739.50 182.00L741.00 179.00L743.00 178.00L745.00 177.00L747.00 176.00L749.00 176.50L751.00 176.50L752.00 170.00L752.50 167.00L754.50 166.50L756.00 164.50L758.00 164.00L760.00 163.00L761.50 164.50L763.00 168.00L765.00 168.50L766.50 167.00L768.50 167.00L770.00 168.50L772.00 169.50L773.50 171.00L775.50 170.50L776.50 166.00L777.00 163.50L779.00 163.00L780.00 158.50L780.50 154.00L782.50 153.50L783.50 157.50L784.50 160.00L786.50 160.50L788.00 159.50L789.50 162.00L790.50 165.50L792.50 166.00L794.00 168.00L796.00 168.50L797.50 170.50L798.50 172.00L800.50 172.50L803.00 172.50L804.50 174.50L806.00 175.00L807.00 179.50L809.00 180.50L811.00 181.00L813.50 181.50L816.00 180.50L817.00 184.00L818.00 187.00L819.50 187.50L819.70 178.00L820.00 177.50L820.20 178.00L822.00 177.50L824.50 178.50L826.50 179.50L827.50 184.00L830.00 184.50L832.50 184.50L834.50 186.00L836.50 187.00L839.00 187.50L840.00 192.00L842.50 193.50L844.00 198.50L846.00 199.00L847.50 201.50L850.00 202.50L852.00 203.50L853.00 208.50L855.50 209.00L857.50 208.00L859.00 206.00L860.00 202.50L862.50 202.00L865.00 202.00L866.50 204.50L869.00 204.50L871.50 204.00L873.50 202.00L875.00 201.50L876.00 207.50L878.00 208.50L880.00 210.00L882.50 211.00L884.50 213.00L886.50 212.50L887.00 204.00L889.00 202.50L890.50 198.00L892.00 196.50L894.50 196.50L897.00 197.00L898.50 195.50L900.00 195.50L901.50 198.00L903.50 199.50L906.00 200.00L908.00 201.00L909.00 204.50L911.50 205.50L913.00 204.00L915.00 204.00L916.50 207.50L919.00 208.50L921.50 209.00L923.00 210.00L924.00 214.00L926.00 214.50L927.00 206.00L928.50 205.00L930.50 206.00L932.50 206.00L933.50 203.50L935.50 203.00L937.50 201.50L940.00 202.00L942.50 204.00L945.00 205.00L947.00 206.50L949.50 207.00L951.00 202.50L952.50 202.00L954.00 205.00L955.00 208.50L956.50 209.00L957.50 199.50L959.00 198.50L961.00 199.50L963.00 200.50L965.00 200.50L967.00 201.50L969.00 203.00L971.00 203.50L972.00 195.50L973.50 194.00L975.00 196.00L976.00 200.00L978.50 200.50L981.50 200.50L982.50 191.00L984.50 190.00L985.50 183.50L986.50 181.00L988.50 180.50L990.50 181.50L992.50 182.50L994.00 185.50L996.00 186.50L998.50 187.00L1000.00 189.50L1001.00 193.50L1003.50 194.00L1006.00 195.00L1008.50 194.00L1010.00 193.00L1012.00 195.50L1014.00 196.50L1015.50 201.50L1017.50 202.50L1019.00 205.50L1020.50 206.50L1022.00 198.00L1023.50 196.00L1025.00 196.50L1026.50 197.50L1029.00 198.00" stroke="#0c2a6e" stroke-width="1.4" fill="none" stroke-linejoin="round" stroke-linecap="round"/><path d="M102.60 136.40H1032.20V380.30H102.60Z" stroke="#666" stroke-width="1.1" fill="none"/><line x1="102.60" y1="332.40" x2="1034.20" y2="332.40" stroke="#5a5a5a" stroke-width="1.9"/><path d="M1032.20 153.80h2M1032.20 179.13h2M1032.20 204.46h2M1032.20 229.79h2M1032.20 255.12h2M1032.20 280.45h2M1032.20 305.78h2" stroke="#5a5a5a" stroke-width="1"/><path d="M103.20 380.30v1.6M153.98 380.30v1.6M204.76 380.30v1.6M255.54 380.30v1.6M306.32 380.30v1.6M357.10 380.30v1.6M407.88 380.30v1.6M458.66 380.30v1.6M509.44 380.30v1.6M560.22 380.30v1.6M611.00 380.30v1.6M661.78 380.30v1.6M712.56 380.30v1.6M763.34 380.30v1.6M814.12 380.30v1.6M864.90 380.30v1.6M915.68 380.30v1.6M966.46 380.30v1.6M1017.24 380.30v1.6" stroke="#5a5a5a" stroke-width="1"/></svg>
<svg class="r" style="left:0;top:0" width="1200" height="848" viewBox="0 0 1200 848"><rect x="101.20" y="393.30" width="964.60" height="17.30" fill="#f0f0f0"/><rect x="101.20" y="392.20" width="964.60" height="1.20" fill="#7d7d7d"/><path d="M300.60 392.00V408.30H340.80V392.00" fill="#fff" stroke="#555" stroke-width="1.2"/><rect x="157.20" y="395.00" width="1.00" height="12.60" fill="#a8a8a8"/><rect x="207.20" y="395.00" width="1.00" height="12.60" fill="#a8a8a8"/><rect x="249.20" y="395.00" width="1.00" height="12.60" fill="#a8a8a8"/><rect x="442.50" y="395.00" width="1.00" height="12.60" fill="#a8a8a8"/><rect x="488.30" y="395.00" width="1.00" height="12.60" fill="#a8a8a8"/><rect x="1006.20" y="394.20" width="59.60" height="14.50" fill="#8cc152"/><rect x="115.80" y="509.80" width="970.40" height="1.00" fill="#b4b4b4"/><rect x="1071.70" y="510.80" width="14.50" height="259.20" fill="#f0f0f0"/><rect x="1085.50" y="510.30" width="1.30" height="278.10" fill="#c2c2c2"/><rect x="115.80" y="526.38" width="955.90" height="15.38" fill="#ebebeb"/><rect x="115.80" y="557.12" width="955.90" height="15.38" fill="#ebebeb"/><rect x="115.80" y="587.88" width="955.90" height="15.38" fill="#ebebeb"/><rect x="115.80" y="618.62" width="955.90" height="15.38" fill="#ebebeb"/><rect x="115.80" y="649.38" width="955.90" height="15.38" fill="#ebebeb"/><rect x="115.80" y="680.12" width="955.90" height="15.38" fill="#ebebeb"/><rect x="115.80" y="710.88" width="955.90" height="15.38" fill="#ebebeb"/><rect x="115.80" y="741.62" width="955.90" height="15.38" fill="#ebebeb"/><rect x="440.6" y="512.4" width="629.9" height="12.3" fill="#98fb80" stroke="#6cc362" stroke-width="0.9"/><rect x="678.30" y="512.60" width="7.40" height="11.80" fill="#c3c3c3"/><rect x="1077.20" y="524.90" width="3.40" height="47.70" fill="#7c7c7c" rx="1.2"/><rect x="115.80" y="771.00" width="969.90" height="17.30" fill="#f0f0f0"/><rect x="115.80" y="769.90" width="969.90" height="1.20" fill="#7d7d7d"/><path d="M266.30 769.70V786.00H315.60V769.70" fill="#fff" stroke="#555" stroke-width="1.2"/><rect x="173.10" y="772.70" width="1.00" height="12.60" fill="#a8a8a8"/><rect x="222.70" y="772.70" width="1.00" height="12.60" fill="#a8a8a8"/><rect x="356.70" y="772.70" width="1.00" height="12.60" fill="#a8a8a8"/><rect x="459.80" y="772.70" width="1.00" height="12.60" fill="#a8a8a8"/><rect x="505.20" y="772.70" width="1.00" height="12.60" fill="#a8a8a8"/><rect x="1025.00" y="772.40" width="60.70" height="13.90" fill="#8cc152"/></svg>
<span class="t" style="left:105.55px;transform-origin:0 50%;top:139.00px;font-size:7.5px;line-height:9px;color:#33338f;transform:scaleX(0.8855);">Balance</span>
<span class="t" style="left:132.00px;transform-origin:0 50%;top:139.00px;font-size:7.5px;line-height:9px;color:#333;">/</span>
<span class="t" style="left:136.80px;transform-origin:0 50%;top:139.00px;font-size:7.5px;line-height:9px;color:#46a846;transform:scaleX(0.9978);">Equity</span>
<span class="t" style="left:105.60px;transform-origin:0 50%;top:336.00px;font-size:7.5px;line-height:9px;color:#222;transform:scaleX(0.9638);">Deposit Load</span>
<span class="t" style="left:1035.80px;transform-origin:0 50%;top:150.00px;font-size:7.5px;line-height:9px;color:#222;transform:scaleX(0.9685);">23547</span>
<span class="t" style="left:1035.80px;transform-origin:0 50%;top:176.00px;font-size:7.5px;line-height:9px;color:#222;transform:scaleX(0.9685);">20948</span>
<span class="t" style="left:1035.80px;transform-origin:0 50%;top:201.00px;font-size:7.5px;line-height:9px;color:#222;transform:scaleX(0.9685);">18349</span>
<span class="t" style="left:1035.80px;transform-origin:0 50%;top:227.00px;font-size:7.5px;line-height:9px;color:#222;transform:scaleX(0.9685);">15750</span>
<span class="t" style="left:1035.80px;transform-origin:0 50%;top:252.00px;font-size:7.5px;line-height:9px;color:#222;transform:scaleX(0.9685);">13151</span>
<span class="t" style="left:1035.80px;transform-origin:0 50%;top:277.00px;font-size:7.5px;line-height:9px;color:#222;transform:scaleX(0.9685);">10552</span>
<span class="t" style="left:1035.80px;transform-origin:0 50%;top:303.00px;font-size:7.5px;line-height:9px;color:#222;transform:scaleX(0.9685);">7954</span>
<div class="r" style="left:1034px;top:328.9px;width:26px;height:4.1px;overflow:hidden">
<span class="t" style="left:1.80px;transform-origin:0 50%;top:-1.00px;font-size:7.5px;line-height:9px;color:#222;transform:scaleX(0.9709);">5355</span>
</div>
<span class="t" style="left:1035.80px;transform-origin:0 50%;top:334.00px;font-size:7.5px;line-height:9px;color:#222;transform:scaleX(1.0204);">50.0%</span>
<span class="t" style="left:1035.80px;transform-origin:0 50%;top:377.00px;font-size:7.5px;line-height:9px;color:#222;transform:scaleX(0.9711);">0.0%</span>
<span class="t" style="left:104.10px;transform-origin:0 50%;top:383.00px;font-size:7.9px;line-height:9px;color:#2a2a2a;font-weight:bold;transform:scaleX(0.9560);">2025.01.02</span>
<span class="t" style="left:154.88px;transform-origin:0 50%;top:383.00px;font-size:7.9px;line-height:9px;color:#2a2a2a;font-weight:bold;transform:scaleX(0.9560);">2025.01.14</span>
<span class="t" style="left:205.66px;transform-origin:0 50%;top:383.00px;font-size:7.9px;line-height:9px;color:#2a2a2a;font-weight:bold;transform:scaleX(0.9560);">2025.01.27</span>
<span class="t" style="left:256.44px;transform-origin:0 50%;top:383.00px;font-size:7.9px;line-height:9px;color:#2a2a2a;font-weight:bold;transform:scaleX(0.9560);">2025.02.10</span>
<span class="t" style="left:307.22px;transform-origin:0 50%;top:383.00px;font-size:7.9px;line-height:9px;color:#2a2a2a;font-weight:bold;transform:scaleX(0.9560);">2025.02.25</span>
<span class="t" style="left:358.00px;transform-origin:0 50%;top:383.00px;font-size:7.9px;line-height:9px;color:#2a2a2a;font-weight:bold;transform:scaleX(0.9560);">2025.03.12</span>
<span class="t" style="left:408.78px;transform-origin:0 50%;top:383.00px;font-size:7.9px;line-height:9px;color:#2a2a2a;font-weight:bold;transform:scaleX(0.9560);">2025.03.25</span>
<span class="t" style="left:459.56px;transform-origin:0 50%;top:383.00px;font-size:7.9px;line-height:9px;color:#2a2a2a;font-weight:bold;transform:scaleX(0.9667);">2025.04.11</span>
<span class="t" style="left:510.34px;transform-origin:0 50%;top:383.00px;font-size:7.9px;line-height:9px;color:#2a2a2a;font-weight:bold;transform:scaleX(0.9560);">2025.04.23</span>
<span class="t" style="left:561.12px;transform-origin:0 50%;top:383.00px;font-size:7.9px;line-height:9px;color:#2a2a2a;font-weight:bold;transform:scaleX(0.9560);">2025.05.09</span>
<span class="t" style="left:611.90px;transform-origin:0 50%;top:383.00px;font-size:7.9px;line-height:9px;color:#2a2a2a;font-weight:bold;transform:scaleX(0.9560);">2025.06.05</span>
<span class="t" style="left:662.68px;transform-origin:0 50%;top:383.00px;font-size:7.9px;line-height:9px;color:#2a2a2a;font-weight:bold;transform:scaleX(0.9560);">2025.06.20</span>
<span class="t" style="left:713.46px;transform-origin:0 50%;top:383.00px;font-size:7.9px;line-height:9px;color:#2a2a2a;font-weight:bold;transform:scaleX(0.9560);">2025.07.08</span>
<span class="t" style="left:764.24px;transform-origin:0 50%;top:383.00px;font-size:7.9px;line-height:9px;color:#2a2a2a;font-weight:bold;transform:scaleX(0.9560);">2025.07.23</span>
<span class="t" style="left:815.02px;transform-origin:0 50%;top:383.00px;font-size:7.9px;line-height:9px;color:#2a2a2a;font-weight:bold;transform:scaleX(0.9560);">2025.08.04</span>
<span class="t" style="left:865.80px;transform-origin:0 50%;top:383.00px;font-size:7.9px;line-height:9px;color:#2a2a2a;font-weight:bold;transform:scaleX(0.9560);">2025.08.22</span>
<span class="t" style="left:916.58px;transform-origin:0 50%;top:383.00px;font-size:7.9px;line-height:9px;color:#2a2a2a;font-weight:bold;transform:scaleX(0.9560);">2025.09.04</span>
<span class="t" style="left:967.36px;transform-origin:0 50%;top:383.00px;font-size:7.9px;line-height:9px;color:#2a2a2a;font-weight:bold;transform:scaleX(0.9560);">2025.09.16</span>
<div class="r" style="left:1016px;top:381px;width:19.3px;height:12px;overflow:hidden">
<span class="t" style="left:0.90px;transform-origin:0 50%;top:2.00px;font-size:7.9px;line-height:9px;color:#2a2a2a;font-weight:bold;transform:scaleX(0.9560);">2025.10.06</span>
</div>
<div class="r" style="left:1035.3px;top:381px;width:30px;height:8.0px;overflow:hidden">
<span class="t" style="left:-18.40px;transform-origin:0 50%;top:2.00px;font-size:7.9px;line-height:9px;color:#2a2a2a;font-weight:bold;transform:scaleX(0.9560);">2025.10.06</span>
</div>
<span class="t" style="left:111.00px;transform-origin:0 50%;top:395.00px;font-size:9.9px;line-height:11px;color:#7a7a7a;transform:scaleX(0.9501);">Overview</span>
<span class="t" style="left:165.30px;transform-origin:0 50%;top:395.00px;font-size:9.9px;line-height:11px;color:#7a7a7a;transform:scaleX(0.9449);">Settings</span>
<span class="t" style="left:215.10px;transform-origin:0 50%;top:395.00px;font-size:9.9px;line-height:11px;color:#7a7a7a;transform:scaleX(0.9715);">Inputs</span>
<span class="t" style="left:257.30px;transform-origin:0 50%;top:395.00px;font-size:9.9px;line-height:11px;color:#7a7a7a;transform:scaleX(0.9166);">Backtest</span>
<span class="t" style="left:307.40px;transform-origin:0 50%;top:395.00px;font-size:9.9px;line-height:11px;color:#222;transform:scaleX(0.9267);">Graph</span>
<span class="t" style="left:349.10px;transform-origin:0 50%;top:395.00px;font-size:9.9px;line-height:11px;color:#7a7a7a;transform:scaleX(0.9407);">Optimization Results</span>
<span class="t" style="left:451.10px;transform-origin:0 50%;top:395.00px;font-size:9.9px;line-height:11px;color:#7a7a7a;transform:scaleX(0.9376);">Agents</span>
<span class="t" style="left:496.10px;transform-origin:0 50%;top:395.00px;font-size:9.9px;line-height:11px;color:#7a7a7a;transform:scaleX(0.9085);">Journal</span>
<span class="t" style="left:916.80px;transform-origin:0 50%;top:397.00px;font-size:9.5px;line-height:11px;color:#262626;transform:scaleX(0.9917);">00:00:40 / 00:00:40</span>
<span class="t" style="left:1026.40px;transform-origin:0 50%;top:396.00px;font-size:9.9px;line-height:11px;color:#122806;transform:scaleX(0.9040);">Start</span>
<span class="t" style="left:153.00px;transform-origin:0 50%;top:469.00px;font-size:14.8px;line-height:16px;color:#111;transform:scaleX(1.1601);">M30</span>
<span class="t" style="left:204.80px;transform-origin:0 50%;top:469.00px;font-size:14.8px;line-height:16px;color:#111;transform:scaleX(0.9233);">TRUE</span>
<span class="t" style="left:256.50px;transform-origin:0 50%;top:469.00px;font-size:14.8px;line-height:16px;color:#111;transform:scaleX(1.1184);">M30</span>
<span class="t" style="left:306.90px;transform-origin:0 50%;top:469.00px;font-size:14.8px;line-height:16px;color:#111;transform:scaleX(1.0144);">SL 600 &amp; TP 1000</span>
<span class="t" style="left:461.60px;transform-origin:0 50%;top:469.00px;font-size:14.8px;line-height:16px;color:#111;transform:scaleX(1.0514);">Lot 1.0 &amp; 0.02</span>
<span class="t" style="left:615.60px;transform-origin:0 50%;top:469.00px;font-size:14.8px;line-height:16px;color:#111;transform:scaleX(1.0727);">10k &amp; 200</span>
<span class="t" style="left:718.20px;transform-origin:0 50%;top:469.00px;font-size:14.8px;line-height:16px;color:#111;transform:scaleX(1.0576);">9016.90 &amp; 151.52</span>
<div class="r" style="left:115.8px;top:511.0px;width:955.8px;height:259.3px;overflow:hidden">
<span class="t" style="left:2.30px;transform-origin:0 50%;top:2.00px;font-size:9.9px;line-height:11px;color:#303030;transform:scaleX(0.9749);">History Quality</span>
<span class="t" style="right:650.80px;transform-origin:100% 50%;top:2.00px;font-size:9.9px;line-height:11px;color:#303030;transform:scaleX(0.9324);">100%</span>
<span class="t" style="left:2.30px;transform-origin:0 50%;top:18.00px;font-size:9.9px;line-height:11px;color:#303030;transform:scaleX(0.8743);">Bars</span>
<span class="t" style="right:650.80px;transform-origin:100% 50%;top:18.00px;font-size:9.9px;line-height:11px;color:#303030;transform:scaleX(0.9820);">9119</span>
<span class="t" style="left:326.25px;transform-origin:0 50%;top:18.00px;font-size:9.9px;line-height:11px;color:#303030;transform:scaleX(0.9078);">Ticks</span>
<span class="t" style="right:327.80px;transform-origin:100% 50%;top:18.00px;font-size:9.9px;line-height:11px;color:#303030;transform:scaleX(0.9493);">44870667</span>
<span class="t" style="left:649.05px;transform-origin:0 50%;top:18.00px;font-size:9.9px;line-height:11px;color:#303030;transform:scaleX(0.9392);">Symbols</span>
<span class="t" style="right:3.60px;transform-origin:100% 50%;top:18.00px;font-size:9.9px;line-height:11px;color:#303030;transform:scaleX(0.9493);">1</span>
<span class="t" style="left:2.30px;transform-origin:0 50%;top:33.00px;font-size:9.9px;line-height:11px;color:#303030;transform:scaleX(0.9827);">Initial Deposit</span>
<span class="t" style="right:650.80px;transform-origin:100% 50%;top:33.00px;font-size:9.9px;line-height:11px;color:#303030;transform:scaleX(0.9387);">10 000.00</span>
<span class="t" style="left:2.30px;transform-origin:0 50%;top:48.00px;font-size:9.9px;line-height:11px;color:#303030;transform:scaleX(0.9973);">Total Net Profit</span>
<span class="t" style="right:650.80px;transform-origin:100% 50%;top:48.00px;font-size:9.9px;line-height:11px;color:#303030;transform:scaleX(0.9372);">9 016.90</span>
<span class="t" style="left:326.25px;transform-origin:0 50%;top:48.00px;font-size:9.9px;line-height:11px;color:#303030;transform:scaleX(0.9589);">Balance Drawdown Absolute</span>
<span class="t" style="right:327.80px;transform-origin:100% 50%;top:48.00px;font-size:9.9px;line-height:11px;color:#303030;transform:scaleX(0.9372);">3 607.00</span>
<span class="t" style="left:649.05px;transform-origin:0 50%;top:48.00px;font-size:9.9px;line-height:11px;color:#303030;transform:scaleX(0.9722);">Equity Drawdown Absolute</span>
<span class="t" style="right:3.60px;transform-origin:100% 50%;top:48.00px;font-size:9.9px;line-height:11px;color:#303030;transform:scaleX(0.9372);">3 779.00</span>
<span class="t" style="left:2.30px;transform-origin:0 50%;top:64.00px;font-size:9.9px;line-height:11px;color:#303030;transform:scaleX(0.9423);">Gross Profit</span>
<span class="t" style="right:650.80px;transform-origin:100% 50%;top:64.00px;font-size:9.9px;line-height:11px;color:#303030;transform:scaleX(0.9387);">62 194.90</span>
<span class="t" style="left:326.25px;transform-origin:0 50%;top:64.00px;font-size:9.9px;line-height:11px;color:#303030;transform:scaleX(0.9527);">Balance Drawdown Maximal</span>
<span class="t" style="right:327.80px;transform-origin:100% 50%;top:64.00px;font-size:9.9px;line-height:11px;color:#303030;transform:scaleX(0.9276);">6 220.10 (26.42%)</span>
<span class="t" style="left:649.05px;transform-origin:0 50%;top:64.00px;font-size:9.9px;line-height:11px;color:#303030;transform:scaleX(0.9657);">Equity Drawdown Maximal</span>
<span class="t" style="right:3.60px;transform-origin:100% 50%;top:64.00px;font-size:9.9px;line-height:11px;color:#303030;transform:scaleX(0.9276);">6 241.10 (26.50%)</span>
<span class="t" style="left:2.30px;transform-origin:0 50%;top:79.00px;font-size:9.9px;line-height:11px;color:#303030;transform:scaleX(0.8910);">Gross Loss</span>
<span class="t" style="right:650.80px;transform-origin:100% 50%;top:79.00px;font-size:9.9px;line-height:11px;color:#303030;transform:scaleX(0.9553);">-53 178.00</span>
<span class="t" style="left:326.25px;transform-origin:0 50%;top:79.00px;font-size:9.9px;line-height:11px;color:#303030;transform:scaleX(0.9405);">Balance Drawdown Relative</span>
<span class="t" style="right:327.80px;transform-origin:100% 50%;top:79.00px;font-size:9.9px;line-height:11px;color:#303030;transform:scaleX(0.9276);">37.85% (3 893.00)</span>
<span class="t" style="left:649.05px;transform-origin:0 50%;top:79.00px;font-size:9.9px;line-height:11px;color:#303030;transform:scaleX(0.9528);">Equity Drawdown Relative</span>
<span class="t" style="right:3.60px;transform-origin:100% 50%;top:79.00px;font-size:9.9px;line-height:11px;color:#303030;transform:scaleX(0.9276);">42.15% (4 532.00)</span>
<span class="t" style="left:2.30px;transform-origin:0 50%;top:110.00px;font-size:9.9px;line-height:11px;color:#303030;transform:scaleX(0.9603);">Profit Factor</span>
<span class="t" style="right:650.80px;transform-origin:100% 50%;top:110.00px;font-size:9.9px;line-height:11px;color:#303030;transform:scaleX(0.9229);">1.17</span>
<span class="t" style="left:326.25px;transform-origin:0 50%;top:110.00px;font-size:9.9px;line-height:11px;color:#303030;transform:scaleX(0.9375);">Expected Payoff</span>
<span class="t" style="right:327.80px;transform-origin:100% 50%;top:110.00px;font-size:9.9px;line-height:11px;color:#303030;transform:scaleX(0.9287);">34.15</span>
<span class="t" style="left:649.05px;transform-origin:0 50%;top:110.00px;font-size:9.9px;line-height:11px;color:#303030;transform:scaleX(0.9589);">Margin Level</span>
<span class="t" style="right:3.60px;transform-origin:100% 50%;top:110.00px;font-size:9.9px;line-height:11px;color:#303030;transform:scaleX(0.9254);">200.89%</span>
<span class="t" style="left:2.30px;transform-origin:0 50%;top:125.00px;font-size:9.9px;line-height:11px;color:#303030;transform:scaleX(0.9260);">Recovery Factor</span>
<span class="t" style="right:650.80px;transform-origin:100% 50%;top:125.00px;font-size:9.9px;line-height:11px;color:#303030;transform:scaleX(0.9229);">1.44</span>
<span class="t" style="left:326.25px;transform-origin:0 50%;top:125.00px;font-size:9.9px;line-height:11px;color:#303030;transform:scaleX(0.9323);">Sharpe Ratio</span>
<span class="t" style="right:327.80px;transform-origin:100% 50%;top:125.00px;font-size:9.9px;line-height:11px;color:#303030;transform:scaleX(0.9229);">3.81</span>
<span class="t" style="left:649.05px;transform-origin:0 50%;top:125.00px;font-size:9.9px;line-height:11px;color:#303030;transform:scaleX(0.9324);">Z-Score</span>
<span class="t" style="right:3.60px;transform-origin:100% 50%;top:125.00px;font-size:9.9px;line-height:11px;color:#303030;transform:scaleX(0.9202);">1.68 (90.70%)</span>
<span class="t" style="left:2.30px;transform-origin:0 50%;top:141.00px;font-size:9.9px;line-height:11px;color:#303030;transform:scaleX(0.8771);">AHPR</span>
<span class="t" style="right:650.80px;transform-origin:100% 50%;top:141.00px;font-size:9.9px;line-height:11px;color:#303030;transform:scaleX(0.9226);">1.0036 (0.36%)</span>
<span class="t" style="left:326.25px;transform-origin:0 50%;top:141.00px;font-size:9.9px;line-height:11px;color:#303030;transform:scaleX(0.9399);">LR Correlation</span>
<span class="t" style="right:327.80px;transform-origin:100% 50%;top:141.00px;font-size:9.9px;line-height:11px;color:#303030;transform:scaleX(0.9229);">0.88</span>
<span class="t" style="left:649.05px;transform-origin:0 50%;top:141.00px;font-size:9.9px;line-height:11px;color:#303030;transform:scaleX(0.9605);">OnTester result</span>
<span class="t" style="right:3.60px;transform-origin:100% 50%;top:141.00px;font-size:9.9px;line-height:11px;color:#303030;transform:scaleX(0.9493);">0</span>
<span class="t" style="left:2.30px;transform-origin:0 50%;top:156.00px;font-size:9.9px;line-height:11px;color:#303030;transform:scaleX(0.8573);">GHPR</span>
<span class="t" style="right:650.80px;transform-origin:100% 50%;top:156.00px;font-size:9.9px;line-height:11px;color:#303030;transform:scaleX(0.9226);">1.0024 (0.24%)</span>
<span class="t" style="left:326.25px;transform-origin:0 50%;top:156.00px;font-size:9.9px;line-height:11px;color:#303030;transform:scaleX(0.9234);">LR Standard Error</span>
<span class="t" style="right:327.80px;transform-origin:100% 50%;top:156.00px;font-size:9.9px;line-height:11px;color:#303030;transform:scaleX(0.9555);">2 677.11</span>
<span class="t" style="left:2.30px;transform-origin:0 50%;top:187.00px;font-size:9.9px;line-height:11px;color:#303030;transform:scaleX(0.9593);">Total Trades</span>
<span class="t" style="right:650.80px;transform-origin:100% 50%;top:187.00px;font-size:9.9px;line-height:11px;color:#303030;transform:scaleX(0.9493);">264</span>
<span class="t" style="left:326.25px;transform-origin:0 50%;top:187.00px;font-size:9.9px;line-height:11px;color:#303030;transform:scaleX(0.9428);">Short Trades (won %)</span>
<span class="t" style="right:327.80px;transform-origin:100% 50%;top:187.00px;font-size:9.9px;line-height:11px;color:#303030;transform:scaleX(0.9274);">122 (38.52%)</span>
<span class="t" style="left:649.05px;transform-origin:0 50%;top:187.00px;font-size:9.9px;line-height:11px;color:#303030;transform:scaleX(0.9430);">Long Trades (won %)</span>
<span class="t" style="right:3.60px;transform-origin:100% 50%;top:187.00px;font-size:9.9px;line-height:11px;color:#303030;transform:scaleX(0.9274);">142 (40.85%)</span>
<span class="t" style="left:2.30px;transform-origin:0 50%;top:202.00px;font-size:9.9px;line-height:11px;color:#303030;transform:scaleX(0.9552);">Total Deals</span>
<span class="t" style="right:650.80px;transform-origin:100% 50%;top:202.00px;font-size:9.9px;line-height:11px;color:#303030;transform:scaleX(0.9493);">528</span>
<span class="t" style="left:326.25px;transform-origin:0 50%;top:202.00px;font-size:9.9px;line-height:11px;color:#303030;transform:scaleX(0.9654);">Profit Trades (% of total)</span>
<span class="t" style="right:327.80px;transform-origin:100% 50%;top:202.00px;font-size:9.9px;line-height:11px;color:#303030;transform:scaleX(0.9274);">105 (39.77%)</span>
<span class="t" style="left:649.05px;transform-origin:0 50%;top:202.00px;font-size:9.9px;line-height:11px;color:#303030;transform:scaleX(0.9413);">Loss Trades (% of total)</span>
<span class="t" style="right:3.60px;transform-origin:100% 50%;top:202.00px;font-size:9.9px;line-height:11px;color:#303030;transform:scaleX(0.9274);">159 (60.23%)</span>
<span class="t" style="right:650.80px;transform-origin:100% 50%;top:217.00px;font-size:9.9px;line-height:11px;color:#303030;transform:scaleX(0.9398);">Largest</span>
<span class="t" style="left:326.25px;transform-origin:0 50%;top:217.00px;font-size:9.9px;line-height:11px;color:#303030;transform:scaleX(1.0134);">profit trade</span>
<span class="t" style="right:327.80px;transform-origin:100% 50%;top:217.00px;font-size:9.9px;line-height:11px;color:#303030;transform:scaleX(0.9372);">1 012.00</span>
<span class="t" style="left:649.05px;transform-origin:0 50%;top:217.00px;font-size:9.9px;line-height:11px;color:#303030;transform:scaleX(0.9521);">loss trade</span>
<span class="t" style="right:3.60px;transform-origin:100% 50%;top:217.00px;font-size:9.9px;line-height:11px;color:#303030;transform:scaleX(0.9564);">-652.00</span>
<span class="t" style="right:650.80px;transform-origin:100% 50%;top:233.00px;font-size:9.9px;line-height:11px;color:#303030;transform:scaleX(0.9550);">Average</span>
<span class="t" style="left:326.25px;transform-origin:0 50%;top:233.00px;font-size:9.9px;line-height:11px;color:#303030;transform:scaleX(1.0134);">profit trade</span>
<span class="t" style="right:327.80px;transform-origin:100% 50%;top:233.00px;font-size:9.9px;line-height:11px;color:#303030;transform:scaleX(0.9325);">592.33</span>
<span class="t" style="left:649.05px;transform-origin:0 50%;top:233.00px;font-size:9.9px;line-height:11px;color:#303030;transform:scaleX(0.9521);">loss trade</span>
<span class="t" style="right:3.60px;transform-origin:100% 50%;top:233.00px;font-size:9.9px;line-height:11px;color:#303030;transform:scaleX(0.9564);">-334.45</span>
<span class="t" style="right:650.80px;transform-origin:100% 50%;top:248.00px;font-size:9.9px;line-height:11px;color:#303030;transform:scaleX(0.9938);">Maximum</span>
<span class="t" style="left:326.25px;transform-origin:0 50%;top:248.00px;font-size:9.9px;line-height:11px;color:#303030;transform:scaleX(0.9439);">consecutive wins ($)</span>
<span class="t" style="right:327.80px;transform-origin:100% 50%;top:248.00px;font-size:9.9px;line-height:11px;color:#303030;transform:scaleX(0.9338);">7 (2 106.00)</span>
<span class="t" style="left:649.05px;transform-origin:0 50%;top:248.00px;font-size:9.9px;line-height:11px;color:#303030;transform:scaleX(0.9298);">consecutive losses ($)</span>
<span class="t" style="right:3.60px;transform-origin:100% 50%;top:248.00px;font-size:9.9px;line-height:11px;color:#303030;transform:scaleX(0.9480);">10 (-3 235.00)</span>
</div>
<span class="t" style="left:126.10px;transform-origin:0 50%;top:773.00px;font-size:9.9px;line-height:11px;color:#7a7a7a;transform:scaleX(0.9501);">Overview</span>
<span class="t" style="left:181.30px;transform-origin:0 50%;top:773.00px;font-size:9.9px;line-height:11px;color:#7a7a7a;transform:scaleX(0.9449);">Settings</span>
<span class="t" style="left:230.90px;transform-origin:0 50%;top:773.00px;font-size:9.9px;line-height:11px;color:#7a7a7a;transform:scaleX(0.9715);">Inputs</span>
<span class="t" style="left:273.40px;transform-origin:0 50%;top:773.00px;font-size:9.9px;line-height:11px;color:#222;transform:scaleX(0.9166);">Backtest</span>
<span class="t" style="left:323.80px;transform-origin:0 50%;top:773.00px;font-size:9.9px;line-height:11px;color:#7a7a7a;transform:scaleX(0.9267);">Graph</span>
<span class="t" style="left:364.90px;transform-origin:0 50%;top:773.00px;font-size:9.9px;line-height:11px;color:#7a7a7a;transform:scaleX(0.9407);">Optimization Results</span>
<span class="t" style="left:468.10px;transform-origin:0 50%;top:773.00px;font-size:9.9px;line-height:11px;color:#7a7a7a;transform:scaleX(0.9376);">Agents</span>
<span class="t" style="left:512.80px;transform-origin:0 50%;top:773.00px;font-size:9.9px;line-height:11px;color:#7a7a7a;transform:scaleX(0.9085);">Journal</span>
<span class="t" style="left:935.90px;transform-origin:0 50%;top:775.00px;font-size:9.5px;line-height:11px;color:#262626;transform:scaleX(0.9917);">00:00:40 / 00:00:40</span>
<span class="t" style="left:1045.20px;transform-origin:0 50%;top:774.00px;font-size:9.9px;line-height:11px;color:#122806;transform:scaleX(0.9040);">Start</span>
</body></html>
